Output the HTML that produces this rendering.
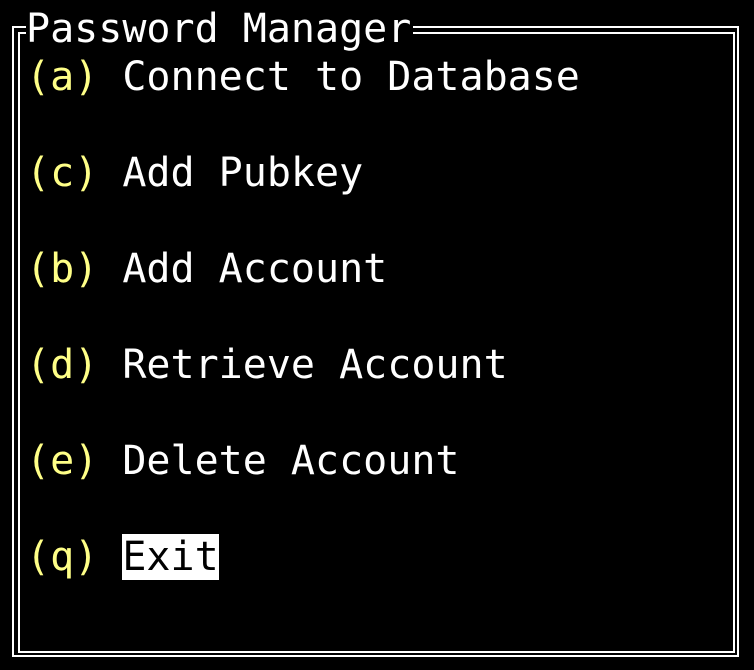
<!DOCTYPE html>
<html><head><meta charset="utf-8"><style>
html,body{margin:0;padding:0;background:#000;width:754px;height:670px;overflow:hidden;position:relative}
.b{position:absolute;border:2px solid #fff;box-sizing:border-box}
.t{position:absolute;left:26px;font-family:"DejaVu Sans Mono","Liberation Mono",monospace;font-size:40px;line-height:48px;height:48px;color:#fff;white-space:pre}
.y{color:#ffff87}
.h{background:#fff;color:#000}
</style></head><body>
<div class="b" style="left:12px;top:26px;width:727px;height:631px"></div>
<div class="b" style="left:18px;top:32px;width:717px;height:621px"></div>
<div class="t" style="top:5px;background:#000;padding-right:2px">Password Manager</div>
<div class="t" style="top:53px"><span class="y">(a)</span> Connect to Database</div>
<div class="t" style="top:149px"><span class="y">(c)</span> Add Pubkey</div>
<div class="t" style="top:245px"><span class="y">(b)</span> Add Account</div>
<div class="t" style="top:341px"><span class="y">(d)</span> Retrieve Account</div>
<div class="t" style="top:437px"><span class="y">(e)</span> Delete Account</div>
<div class="t" style="top:533px"><span class="y">(q)</span> <span class="h">Exit</span></div>
</body></html>
